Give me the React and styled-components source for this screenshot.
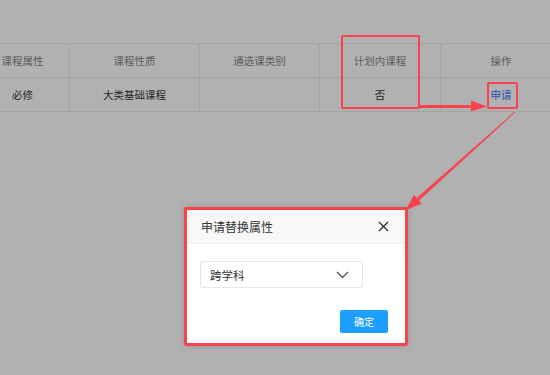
import React from "react";
import styled, { createGlobalStyle } from "styled-components";

const GlobalStyle = createGlobalStyle`
  html, body {
    margin: 0;
    padding: 0;
    background: #b1b1b1;
  }
  body {
    width: 550px;
    height: 375px;
    overflow: hidden;
    font-family: "Noto Sans CJK SC", "Noto Sans", sans-serif;
  }
`;

const Page = styled.div`
  position: relative;
  width: 550px;
  height: 375px;
  padding-top: 43px;
  box-sizing: border-box;
  overflow: hidden;
`;

const Table = styled.div`
  display: grid;
  grid-template-columns: 94px 130px 120px 121px 120px;
  margin-left: -24px;
  border-top: 1px solid #a4a4a4;
`;

const Cell = styled.div`
  height: 33px;
  display: flex;
  align-items: center;
  justify-content: center;
  font-size: 10.5px;
  color: ${(p) => (p.$head ? "#5b5b5b" : "#262626")};
  border-bottom: 1px solid #a4a4a4;
  border-right: 1px solid #a4a4a4;
  &:nth-child(5n) {
    border-right: none;
  }
`;

const Link = styled.span`
  color: #3a5db2;
  font-weight: 500;
`;

const Mark = styled.div`
  position: absolute;
  left: ${(p) => p.$x}px;
  top: ${(p) => p.$y}px;
  width: ${(p) => p.$w}px;
  height: ${(p) => p.$h}px;
  border: 2px solid #f8434f;
  border-radius: 2px;
  box-sizing: border-box;
`;

const Arrows = styled.svg`
  position: absolute;
  left: 0;
  top: 0;
  pointer-events: none;
`;

const Modal = styled.div`
  position: absolute;
  left: 184px;
  top: 207px;
  width: 224px;
  height: 139px;
  box-sizing: border-box;
  border: 3px solid #f8434f;
  border-radius: 2px;
  background: #fff;
  display: flex;
  flex-direction: column;
  box-shadow: 0 0 6px rgba(0, 0, 0, 0.15);
`;

const ModalHeader = styled.div`
  height: 33px;
  display: flex;
  align-items: center;
  justify-content: space-between;
  padding: 0 16px 0 14px;
  background: #f8f8f8;
  border-bottom: 1px solid #eee;
  font-size: 12px;
  color: #333;
`;

const ModalBody = styled.div`
  flex: 1;
  display: flex;
  flex-direction: column;
  padding: 17px 17px 10px 13px;
`;

const Select = styled.div`
  width: 163px;
  height: 27px;
  box-sizing: border-box;
  border: 1px solid #e6e6e6;
  border-radius: 2px;
  display: flex;
  align-items: center;
  justify-content: space-between;
  padding: 0 13px 0 9px;
  font-size: 11.5px;
  color: #333;
`;

const Footer = styled.div`
  margin-top: auto;
  display: flex;
  justify-content: flex-end;
`;

const Button = styled.button`
  width: 48px;
  height: 23px;
  border: none;
  border-radius: 2px;
  background: #1e9fff;
  color: #fff;
  font-family: inherit;
  font-size: 10px;
  padding: 0;
`;

const heads = ["课程属性", "课程性质", "通选课类别", "计划内课程", "操作"];

export default function App() {
  return (
    <>
      <GlobalStyle />
      <Page>
        <Table>
          {heads.map((h) => (
            <Cell key={h} $head>
              {h}
            </Cell>
          ))}
          <Cell>必修</Cell>
          <Cell>大类基础课程</Cell>
          <Cell />
          <Cell>否</Cell>
          <Cell>
            <Link>申请</Link>
          </Cell>
        </Table>

        <Mark $x={341} $y={35} $w={79} $h={74} />
        <Mark $x={487} $y={82} $w={31} $h={27} />

        <Arrows width="550" height="375" viewBox="0 0 550 375">
          <rect x="419" y="105" width="54" height="3" fill="#f8434f" />
          <polygon points="471,100.5 487,106.5 471,111.5" fill="#f8434f" />
          <polygon
            points="515.3,112.3 514.7,111.7 416.7,198 419.1,200.6"
            fill="#f8434f"
          />
          <polygon points="406,210 421.9,203.8 413.9,194.8" fill="#f8434f" />
        </Arrows>

        <Modal>
          <ModalHeader>
            <span>申请替换属性</span>
            <svg width="11" height="11" viewBox="0 0 11 11">
              <path
                d="M1 1 L10 10 M10 1 L1 10"
                stroke="#333"
                strokeWidth="1.4"
                fill="none"
              />
            </svg>
          </ModalHeader>
          <ModalBody>
            <Select>
              <span>跨学科</span>
              <svg width="13" height="8" viewBox="0 0 13 8">
                <path
                  d="M1 1 L6.5 6.5 L12 1"
                  stroke="#555"
                  strokeWidth="1.4"
                  fill="none"
                />
              </svg>
            </Select>
            <Footer>
              <Button>确定</Button>
            </Footer>
          </ModalBody>
        </Modal>
      </Page>
    </>
  );
}
